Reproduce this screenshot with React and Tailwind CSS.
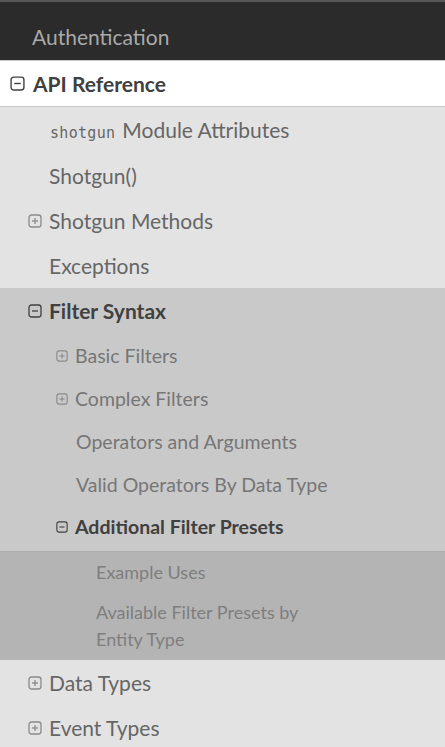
import React from "react";

function Box({ open, size = 14, color = "#404040" }) {
  return (
    <svg width={size} height={size} viewBox="0 0 14 14" className="shrink-0">
      <rect x="1" y="1" width="12" height="12" rx="2.5" fill="none" stroke={color} strokeWidth="1.3" />
      <line x1="4" y1="7" x2="10" y2="7" stroke={color} strokeWidth="1.3" />
      {!open && <line x1="7" y1="4" x2="7" y2="10" stroke={color} strokeWidth="1.3" />}
    </svg>
  );
}

export default function App() {
  const font = { fontFamily: "Lato, 'Noto Sans', sans-serif" };
  return (
    <div className="w-[445px] h-[747px] overflow-hidden bg-[#e3e3e3]" style={font}>
      <div className="h-[61px] bg-[#2b2b2b] border-t-2 border-[#585858] border-b border-b-[#c9c9c9] flex items-center pl-[32px] pt-[12px]">
        <span className="text-[21px] text-[#a9a9a9]">Authentication</span>
      </div>
      <div className="h-[46px] bg-white border-b border-[#c9c9c9] flex items-center pl-[10px] gap-[8px]">
        <Box open size={15} color="#404040" />
        <span className="text-[21px] font-bold text-[#404040]">API Reference</span>
      </div>
      <div className="bg-[#e3e3e3] pt-[1px]">
        <div className="h-[45px] flex items-baseline pt-[6px] pl-[50px] text-[21px] text-[#666]">
          <span className="text-[15px] mr-[7px] tracking-[0.3px]" style={{ fontFamily: "'DejaVu Sans Mono', monospace" }}>shotgun</span>
          <span>Module Attributes</span>
        </div>
        <div className="h-[45px] flex items-center pl-[49px] text-[21px] text-[#666]">Shotgun()</div>
        <div className="h-[45px] flex items-center pl-[28px] gap-[7px] text-[21px] text-[#666]">
          <Box size={14} color="#8a8a8a" />
          <span>Shotgun Methods</span>
        </div>
        <div className="h-[45px] flex items-center pl-[49px] text-[21px] text-[#666]">Exceptions</div>
      </div>
      <div className="bg-[#c9c9c9]">
        <div className="h-[46px] flex items-center pl-[28px] gap-[7px]">
          <Box open size={14} color="#404040" />
          <span className="text-[21px] font-bold text-[#404040]">Filter Syntax</span>
        </div>
        <div className="h-[43px] flex items-center pl-[56px] gap-[7px] text-[19.5px] text-[#767676]">
          <Box size={12} color="#8a8a8a" />
          <span>Basic Filters</span>
        </div>
        <div className="h-[43px] flex items-center pl-[56px] gap-[7px] text-[19.5px] text-[#767676]">
          <Box size={12} color="#8a8a8a" />
          <span>Complex Filters</span>
        </div>
        <div className="h-[43px] flex items-center pl-[76px] text-[19.5px] text-[#767676]">Operators and Arguments</div>
        <div className="h-[43px] flex items-center pl-[76px] text-[19.5px] text-[#767676]">Valid Operators By Data Type</div>
        <div className="h-[45px] flex items-center pl-[56px] gap-[7px] pb-[3px]">
          <Box open size={12} color="#404040" />
          <span className="text-[19.5px] font-bold text-[#404040]">Additional Filter Presets</span>
        </div>
      </div>
      <div className="bg-[#b4b4b4] border-t border-[#adadad] h-[109px] pl-[96px] text-[18px] text-[#7e7e7e]">
        <div className="h-[40px] flex items-center">Example Uses</div>
        <div className="leading-[27px] w-[225px] pt-[7px]">Available Filter Presets by Entity Type</div>
      </div>
      <div className="bg-[#e3e3e3]">
        <div className="h-[46px] flex items-center pl-[28px] gap-[7px] text-[21px] text-[#666]">
          <Box size={14} color="#8a8a8a" />
          <span>Data Types</span>
        </div>
        <div className="h-[44px] flex items-center pl-[28px] gap-[7px] text-[21px] text-[#666]">
          <Box size={14} color="#8a8a8a" />
          <span>Event Types</span>
        </div>
      </div>
    </div>
  );
}
